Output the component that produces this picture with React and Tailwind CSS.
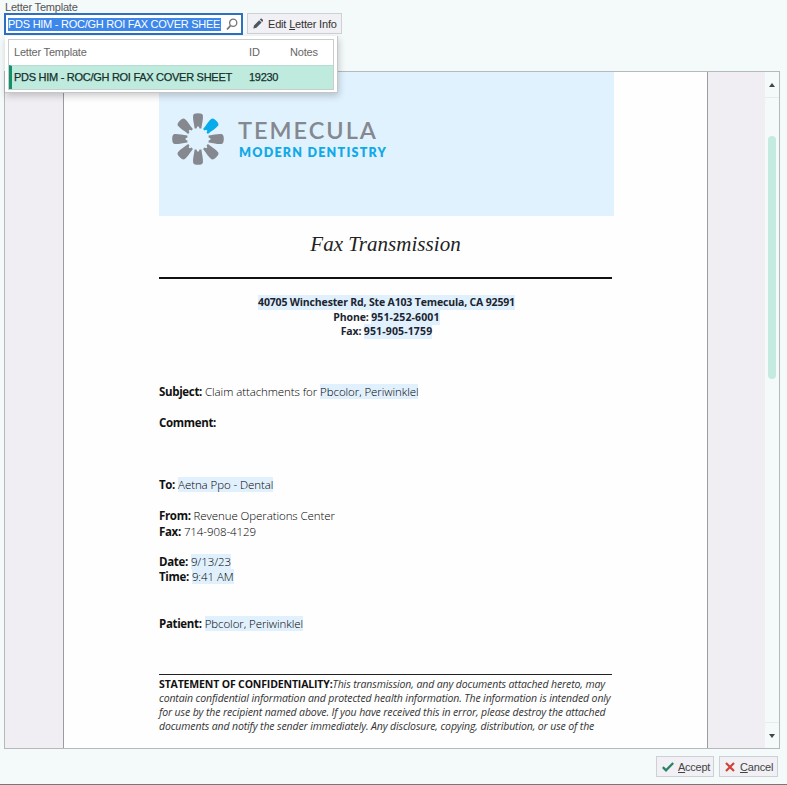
import React from "react";

const PETALS = [0, 45, 90, 135, 180, 225, 270, 315];

function Logo() {
  return (
    <svg className="h-[54px] w-[54px] shrink-0" viewBox="-27 -27 54 54">
      {PETALS.map((a) => (
        <path
          key={a}
          transform={`rotate(${a})`}
          fill={a === 45 ? "#06abec" : "#85888f"}
          d="M-4.9 -23.5 Q-4.6 -25.8 0 -25.8 Q4.6 -25.8 4.9 -23.5 C5.3 -19.5 4 -16 3.4 -10.6 L1.5 -10.6 L0.8 -12.4 L-0.8 -12.4 L-1.5 -10.6 L-3.4 -10.6 C-4 -16 -5.3 -19.5 -4.9 -23.5 Z"
        />
      ))}
    </svg>
  );
}

function Field({ children, className = "" }) {
  return <span className={`inline-block h-[15px] bg-[#e0f1fd] leading-[15px] ${className}`}>{children}</span>;
}

function Row({ label, children, className = "" }) {
  return (
    <div className={`flex items-center whitespace-pre text-[11.5px] font-light leading-[15px] tracking-[-0.08px] text-black ${className}`}>
      <b className="mr-[3px] font-bold tracking-[-0.33px] text-[#111]">{label}</b>
      {children}
    </div>
  );
}

function Toolbar() {
  return (
    <div className="relative h-[71px] shrink-0 pl-[5px] text-[#333]">
      <div className="h-[13px] text-[11px] leading-[14px] tracking-[-0.2px] text-[#555]">Letter Template</div>
      <div className="-ml-px flex">
        <div className="flex h-[22px] w-[239px] items-center border-2 border-[#2f6fc0] bg-white pl-[2px]">
          <span className="h-[13px] w-[213px] whitespace-nowrap bg-[#3d87ea] text-[11px] leading-[13px] tracking-[-0.26px] text-white">
            PDS HIM - ROC/GH ROI FAX COVER SHEE
          </span>
          <svg className="ml-[5px] h-[13px] w-[12px]" viewBox="0 0 12 13" fill="none" stroke="#777">
            <circle cx="7.2" cy="4.8" r="3.6" strokeWidth="1.3" />
            <path d="M4.5 7.6 L1 11.5" strokeWidth="1.8" />
          </svg>
        </div>
        <button className="ml-[4px] flex h-[21px] w-[95px] items-center border border-[#cfd0d6] bg-[#f1f0f4] pl-[5px] text-[11px]">
          <svg className="mr-[5px] h-[11px] w-[10px]" viewBox="0 0 10 11" fill="#4b5563">
            <path d="M0.3 10.5 L1 7.4 L6.2 2.2 L8.6 4.6 L3.4 9.8 Z M6.9 1.5 L7.8 0.6 Q8.3 0.3 8.8 0.7 L10 1.9 Q10.3 2.5 9.9 3.1 L9.2 3.9 Z" />
          </svg>
          <span className="whitespace-nowrap pt-px tracking-[-0.18px]">
            Edit <u className="underline-offset-1">L</u>etter Info
          </span>
        </button>
      </div>
      <div className="absolute left-[5px] top-[36px] z-10 h-[57px] w-[333px] border-b border-r border-[#c3c7c9] bg-white p-[3px] text-[11px] shadow-[1px_3px_7px_rgba(0,0,0,0.2)]">
        <div className="h-[51px] w-[326px] border border-[#c9cdcc]">
          <div className="flex h-[25px] items-center pl-[5px] text-[#666]">
            <span className="w-[235px] tracking-[-0.2px]">Letter Template</span>
            <span className="w-[41px]">ID</span>
            <span className="tracking-[-0.2px]">Notes</span>
          </div>
          <div className="flex h-[24px] items-center whitespace-nowrap border-l-[3px] border-t border-l-[#12906a] border-t-[#b6ddd0] bg-[#bfebdf] pl-[2px] font-normal text-[#16302b] [-webkit-text-stroke:0.25px_#16302b]">
            <span className="w-[235px] tracking-[-0.28px]">PDS HIM - ROC/GH ROI FAX COVER SHEET</span>
            <span className="tracking-[-0.3px]">19230</span>
          </div>
        </div>
      </div>
    </div>
  );
}

function Letter() {
  return (
    <div className="w-[645px] shrink-0 overflow-hidden border-x border-[#9b9ba0] bg-[#fefefe] pl-[95px] font-['Open_Sans','Noto_Sans',sans-serif]">
      <div className="flex h-[144px] w-[455px] items-start bg-[#e0f2fe] pl-[12px] pt-[40px]">
        <Logo />
        <div className="ml-[13px] mt-[4px] whitespace-nowrap font-['Lato',sans-serif]">
          <div className="h-[26px] text-[23.5px] font-semibold leading-[28px] tracking-[2px] text-[#85888f]">TEMECULA</div>
          <div className="pl-px text-[12.5px] font-extrabold leading-[21px] tracking-[1.25px] text-[#12a9e8]">MODERN DENTISTRY</div>
        </div>
      </div>
      <div className="h-[63px] w-[453px] border-b-2 border-[#111] text-center font-['Liberation_Serif',serif] text-[21px] italic leading-[56px] tracking-[0.03px] text-[#222]">
        Fax Transmission
      </div>
      <div className="mt-[16px] flex w-[455px] flex-col items-center whitespace-pre text-[10.5px] font-bold leading-[14px] text-[#1c2430]">
        <div className="h-[14.5px] tracking-[-0.16px]"><Field>40705 Winchester Rd, Ste A103 Temecula, CA 92591</Field></div>
        <div className="h-[14.5px] tracking-[-0.15px]">Phone: <Field className="tracking-[0.14px]">951-252-6001</Field></div>
        <div className="h-[14px] tracking-[-0.15px]">Fax: <Field className="tracking-[0.14px]">951-905-1759</Field></div>
      </div>
      <Row className="mt-[46px] h-[15px]" label="Subject:">
        <span>Claim attachments for </span>
        <Field>Pbcolor, Periwinklel</Field>
      </Row>
      <Row className="mt-[16px] h-[15px]" label="Comment:" />
      <Row className="mt-[47px] h-[15px]" label="To:"><Field>Aetna Ppo - Dental</Field></Row>
      <Row className="mt-[16px] h-[15px]" label="From:"><span>Revenue Operations Center</span></Row>
      <Row className="h-[16px]" label="Fax:"><span>714-908-4129</span></Row>
      <Row className="mt-[15px] h-[15px]" label="Date:"><Field>9/13/23</Field></Row>
      <Row className="h-[15px]" label="Time:"><Field>9:41 AM</Field></Row>
      <Row className="mt-[32px] h-[15px]" label="Patient:"><Field>Pbcolor, Periwinklel</Field></Row>
      <div className="mt-[43px] w-[453px] whitespace-nowrap border-t border-[#222] pt-[2px] text-[10.5px] italic leading-[14px] tracking-[-0.12px] text-[#333]">
        <div><b className="tracking-[-0.15px] not-italic text-[#111]">STATEMENT OF CONFIDENTIALITY:</b><span>This transmission, and any documents attached hereto, may</span></div>
        <div><span>contain confidential information and protected health information. The information is intended only</span></div>
        <div><span>for use by the recipient named above. If you have received this in error, please destroy the attached</span></div>
        <div><span>documents and notify the sender immediately. Any disclosure, copying, distribution, or use of the</span></div>
      </div>
    </div>
  );
}

function ScrollBar() {
  return (
    <div className="flex w-[14px] flex-col items-center bg-[#f4f9fa]">
      <div className="flex h-[26px] w-full items-center justify-center border-b border-[#e6ecee]">
        <div className="border-x-[3px] border-b-[4px] border-x-transparent border-b-[#444]" />
      </div>
      <div className="mt-[38px] h-[243px] w-[8px] rounded-full bg-[#c5eadf]" />
      <div className="flex-1" />
      <div className="flex h-[26px] w-full items-center justify-center border-t border-[#e6ecee]">
        <div className="border-x-[3px] border-t-[4px] border-x-transparent border-t-[#444]" />
      </div>
    </div>
  );
}

export default function App() {
  return (
    <div className="flex h-[785px] w-[787px] flex-col overflow-hidden border-b border-[#777] bg-[#f4f9fa] font-['Liberation_Sans',Arial,sans-serif]">
      <Toolbar />
      <div className="ml-[4px] flex h-[678px] w-[776px] shrink-0 border border-[#b5b9bb] bg-[#f0eef2]">
        <div className="w-[58px] shrink-0" />
        <Letter />
        <div className="flex-1" />
        <ScrollBar />
      </div>
      <div className="mt-[7px] flex pl-[656px] text-[11px] text-[#444]">
        <button className="flex h-[21px] w-[58px] items-center border border-[#cfd0d6] bg-[#f1f0f4] pl-[5px]">
          <svg className="mr-[4px] h-[10px] w-[12px] shrink-0" viewBox="0 0 12 10" fill="none" stroke="#2b8265" strokeWidth="2.3">
            <path d="M0.8 5.2 L4 8.3 L11.2 1" />
          </svg>
          <span className="pt-px tracking-[-0.25px]"><u className="underline-offset-1">A</u>ccept</span>
        </button>
        <button className="ml-[5px] flex h-[21px] w-[59px] items-center border border-[#cfd0d6] bg-[#f1f0f4] pl-[5px]">
          <svg className="mr-[5px] h-[10px] w-[10px] shrink-0" viewBox="0 0 10 10" fill="none" stroke="#cf4337" strokeWidth="2.2">
            <path d="M1 1 L9 9 M9 1 L1 9" />
          </svg>
          <span className="pt-px tracking-[-0.15px]"><u className="underline-offset-1">C</u>ancel</span>
        </button>
      </div>
    </div>
  );
}
